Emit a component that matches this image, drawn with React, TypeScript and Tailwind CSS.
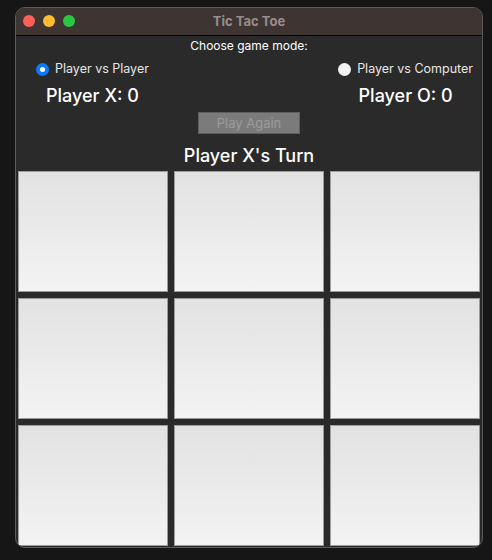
import React, { useState } from "react";

const font = { fontFamily: "Inter, 'Liberation Sans', sans-serif" };

const Radio = ({ checked, label }: { checked: boolean; label: string }) => (
  <div className="flex items-center gap-[6px] h-[16px]">
    {checked ? (
      <span className="w-[13px] h-[13px] rounded-full bg-[#0a7aff] flex items-center justify-center">
        <span className="w-[5px] h-[5px] rounded-full bg-white" />
      </span>
    ) : (
      <span className="w-[13px] h-[13px] rounded-full bg-[#f2f2f2]" />
    )}
    <span className="text-[12.5px] text-[#e6e6e6]">{label}</span>
  </div>
);

const App: React.FC = () => {
  const [board] = useState<string[]>(Array(9).fill(""));

  return (
    <div className="w-[492px] h-[560px] bg-[#161616] pt-[7px] pl-[15px]" style={font}>
      <div className="w-[468px] h-[541px] rounded-[10px] border border-[#5b5b5b] overflow-hidden bg-[#2a2a2a] flex flex-col">
        {/* title bar */}
        <div className="relative h-[28px] bg-[#3e3432] border-b border-black flex items-center justify-center shrink-0">
          <div className="absolute left-[7px] top-[7px] flex gap-[8px]">
            <span className="w-[12px] h-[12px] rounded-full bg-[#fe5f57]" />
            <span className="w-[12px] h-[12px] rounded-full bg-[#febc2e]" />
            <span className="w-[12px] h-[12px] rounded-full bg-[#28c840]" />
          </div>
          <span className="text-[13px] font-bold text-[#978e8b]">Tic Tac Toe</span>
        </div>

        {/* controls */}
        <div className="flex flex-col items-center">
          <div className="text-[12px] text-white mt-[2px] h-[16px] leading-[16px]">Choose game mode:</div>
          <div className="w-full flex justify-between pl-[20px] pr-[9px] mt-[7px]">
            <div className="flex flex-col items-center">
              <Radio checked label="Player vs Player" />
              <div className="text-[18px] font-medium text-white mt-[8px] leading-[22px]">Player X: 0</div>
            </div>
            <div className="flex flex-col items-center">
              <Radio checked={false} label="Player vs Computer" />
              <div className="text-[18px] font-medium text-white mt-[8px] leading-[22px]">Player O: 0</div>
            </div>
          </div>
          <button className="mt-[5px] w-[102px] h-[22px] bg-[#7b7b7b] border border-[#5e5e5e] text-[13px] text-[#9b9b9b] leading-none">
            Play Again
          </button>
          <div className="text-[18px] font-medium text-white mt-[11px] leading-[22px]">Player X's Turn</div>
        </div>

        {/* board */}
        <div className="grid grid-cols-3 gap-[6px] px-[2px] mt-[4px]">
          {board.map((v, i) => (
            <div
              key={i}
              className="h-[121px] border border-[#9c9c9c] bg-gradient-to-b from-[#e2e2e2] to-[#f3f3f3] flex items-center justify-center text-4xl"
            >
              {v}
            </div>
          ))}
        </div>
      </div>
    </div>
  );
};

export default App;
